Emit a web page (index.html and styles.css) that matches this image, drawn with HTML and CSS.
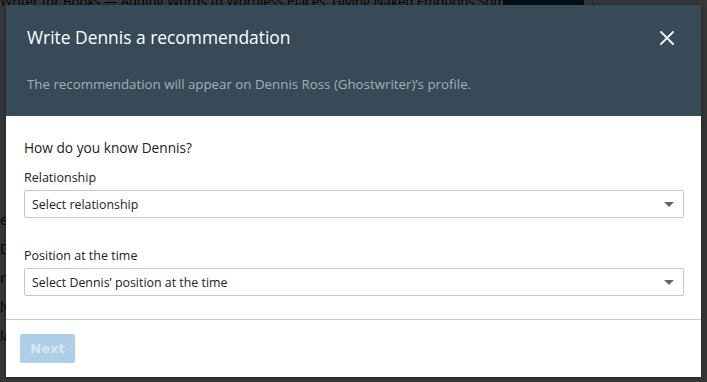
FILE: index.html
```html
<!DOCTYPE html>
<html>
<head>
<meta charset="utf-8">
<link rel="stylesheet" href="styles.css">
</head>
<body>
<div class="page">
  <div class="page-top">
    <div class="page-title">Writer for Books — Adding Words to Wordless Places, Giving Naked Emotions Somer</div>
    <div class="page-btn"></div>
    <div class="page-sep"></div>
  </div>
  <div class="page-side">
    <p>e</p><p>D</p><p>n</p><p>lv</p><p>la</p>
  </div>
</div>
<div class="backdrop"></div>
<div class="modal">
  <div class="modal-header">
    <div class="modal-title-row">
      <h2 class="modal-title">Write Dennis a recommendation</h2>
      <button class="close-btn" aria-label="Close">
        <svg width="14" height="14" viewBox="0 0 14 14"><path d="M1 1L13 13M13 1L1 13" stroke="#fff" stroke-width="1.8" stroke-linecap="square"/></svg>
      </button>
    </div>
    <p class="modal-sub">The recommendation will appear on Dennis Ross (Ghostwriter)’s profile.</p>
  </div>
  <div class="modal-body">
    <h3 class="question">How do you know Dennis?</h3>
    <div class="field">
      <label class="field-label">Relationship</label>
      <div class="select"><span>Select relationship</span><i class="caret"></i></div>
    </div>
    <div class="field field-second">
      <label class="field-label">Position at the time</label>
      <div class="select"><span>Select Dennis’ position at the time</span><i class="caret"></i></div>
    </div>
  </div>
  <div class="modal-footer">
    <button class="next-btn" disabled>Next</button>
  </div>
</div>
</body>
</html>
```
FILE: styles.css
```css
html, body {
  margin: 0;
  padding: 0;
  width: 707px;
  height: 382px;
  overflow: hidden;
}
body {
  background: #f3f3f3;
  font-family: "Open Sans", "Noto Sans", sans-serif;
  position: relative;
}
.page-top {
  display: flex;
  align-items: flex-start;
  height: 40px;
  background: #fff;
}
.page-title {
  font-size: 13.2px;
  line-height: 18px;
  color: #111;
  margin-top: -8px;
  width: 503px;
  white-space: nowrap;
  overflow: hidden;
}
.page-btn {
  width: 81px;
  height: 20px;
  background: #0a4a80;
  margin-top: -10px;
}
.page-sep {
  width: 1px;
  height: 20px;
  background: #bbb;
  margin-left: 8px;
}
.page-side {
  padding-top: 170px;
}
.page-side p {
  margin: 0 0 10px 0;
  font-size: 14px;
  line-height: 19px;
  color: #222;
}
.backdrop {
  position: absolute;
  inset: 0;
  background: rgba(0, 0, 0, 0.78);
}
.modal {
  position: absolute;
  left: 6px;
  top: 5px;
  width: 695px;
  height: 372px;
  background: #fff;
  display: flex;
  flex-direction: column;
  box-shadow: 0 0 4px rgba(0,0,0,0.4);
}
.modal-header {
  background: #364a58;
  height: 111px;
  box-sizing: border-box;
  padding: 20px 20px 0 21px;
}
.modal-title-row {
  display: flex;
  align-items: center;
  justify-content: space-between;
  height: 24px;
}
.modal-title {
  margin: 0;
  font-size: 17.4px;
  font-weight: 400;
  color: #fff;
  line-height: 24px;
}
.close-btn {
  background: none;
  border: 0;
  padding: 0;
  margin-right: 7px;
  margin-top: 2px;
  width: 14px;
  height: 14px;
  display: flex;
}
.modal-sub {
  margin: 25px 0 0 0;
  font-size: 13.3px;
  line-height: 20px;
  color: #a2afb8;
}
.modal-body {
  flex: 1;
  padding: 22px 17px 0 18px;
}
.question {
  margin: 0;
  font-size: 13.7px;
  font-weight: 400;
  line-height: 20px;
  color: #222;
}
.field {
  margin-top: 11px;
}
.field-second {
  margin-top: 29px;
}
.field-label {
  display: block;
  font-size: 12.5px;
  line-height: 18px;
  color: #222;
  margin-bottom: 3px;
}
.select {
  height: 28px;
  box-sizing: border-box;
  border: 1px solid #c6c6c6;
  border-radius: 2px;
  display: flex;
  align-items: center;
  justify-content: space-between;
  padding: 0 9px 0 7px;
  font-size: 12.4px;
  color: #222;
}
.caret {
  width: 0;
  height: 0;
  border-left: 5px solid transparent;
  border-right: 5px solid transparent;
  border-top: 5px solid #666;
}
.modal-footer {
  border-top: 1px solid #c8c8c8;
  padding: 14px 14px 14px;
}
.next-btn {
  width: 55px;
  height: 29px;
  border: 0;
  border-radius: 2px;
  background: #afcfe6;
  color: #d6e6f2;
  font-family: "DejaVu Sans", sans-serif;
  font-weight: 700;
  font-size: 13px;
  padding: 0;
}
```
